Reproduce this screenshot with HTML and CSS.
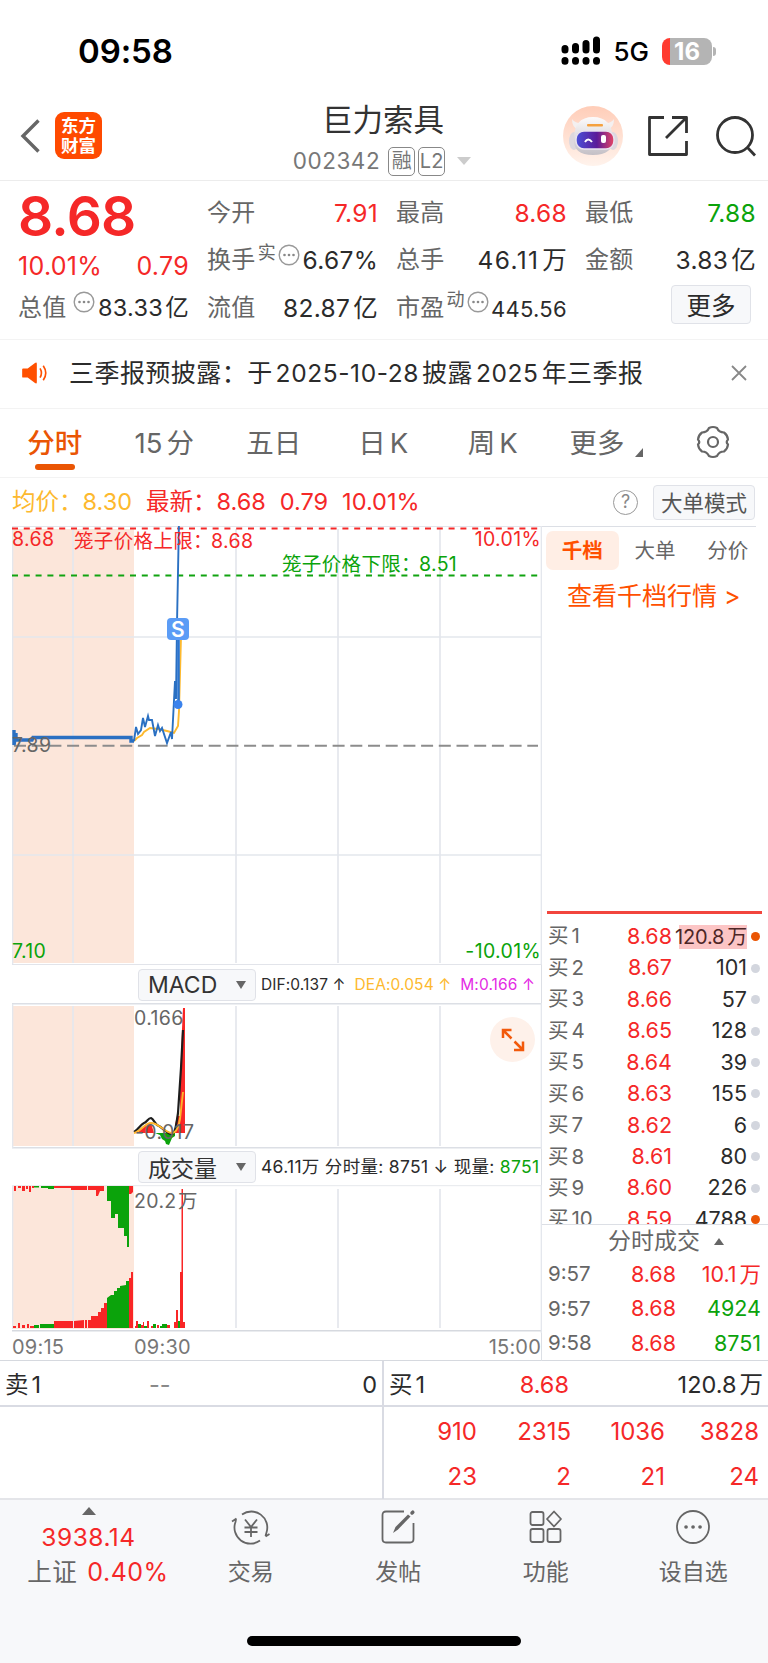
FILE: index.html
```html
<!DOCTYPE html>
<html lang="zh-CN">
<head>
  <meta charset="utf-8">
  <title>巨力索具 002342</title>
  <link rel="stylesheet" href="styles.css">
</head>
<body>

  <!-- Status bar -->
  <div class="status">
    <span class="clock">09:58</span>
    <svg class="signal" width="40" height="29" viewBox="0 0 40 29">
      <g stroke="#000" stroke-width="7" stroke-linecap="round">
        <path d="M4 12.500v1.500M14.500 10.500v3.500M25 7.500v6.500M35.500 4v10M4 24.500v.7M14.500 24.500v.7M25 24.500v.7M35.500 24.500v.7"/>
      </g>
    </svg>
    <span class="net">5G</span>
    <span class="battery"><b>16</b></span>
    <span class="battery-tip"></span>
  </div>

  <!-- Header -->
  <div class="header">
    <svg class="back" width="22" height="36" viewBox="0 0 22 36"><path d="M18.500 2.500L3 18l15.500 15.500" fill="none" stroke="#666" stroke-width="3.400"/></svg>
    <div class="logo">东方<br>财富</div>
    <div class="title">
      <h1>巨力索具</h1>
      <div class="code"><span>002342</span><i>融</i><i>L2</i><svg width="14" height="8"><path d="M0 0h14l-7 8z" fill="#ccc"/></svg></div>
    </div>
    <svg class="robot" width="60" height="60" viewBox="0 0 60 60">
      <defs>
        <linearGradient id="halo" x1="0" y1="0" x2="0" y2="1"><stop offset="0" stop-color="#ffcdb8"/><stop offset="1" stop-color="#fff3ec"/></linearGradient>
        <linearGradient id="visor" x1="0" y1="0" x2="1" y2="0"><stop offset="0" stop-color="#4a50d8"/><stop offset=".55" stop-color="#5b1a99"/><stop offset="1" stop-color="#e64564"/></linearGradient>
        <linearGradient id="shell" x1="0" y1="0" x2="0" y2="1"><stop offset="0" stop-color="#fdfbfb"/><stop offset="1" stop-color="#c4c0c6"/></linearGradient>
      </defs>
      <circle cx="30" cy="30" r="30" fill="url(#halo)"/>
      <path d="M9 13q0 9 6 10l6-6q-9 1-12-4zM51 13q0 9-6 10l-5-6q8 1 11-4z" fill="#f4f0f0"/>
      <ellipse cx="11" cy="35" rx="5" ry="9" fill="#ddd8de"/>
      <ellipse cx="50" cy="35" rx="5" ry="9" fill="#ddd8de"/>
      <path d="M11 33q0-22 19-22t20 22q0 16-20 16T11 33z" fill="url(#shell)"/>
      <rect x="13" y="25" width="38" height="18" rx="8" fill="url(#visor)" stroke="#e9e2ef" stroke-width="1.500"/>
      <path d="M22 36q3-5 7 0" fill="none" stroke="#fff" stroke-width="2"/>
      <rect x="38" y="29" width="5" height="8" rx="2" fill="#fff"/>
      <rect x="24" y="18" width="16" height="2.500" rx="1" fill="#f5a13e"/>
    </svg>
    <svg class="share" width="42" height="42" viewBox="0 0 42 42" fill="none" stroke="#333" stroke-width="2.800" stroke-linejoin="round">
      <path d="M17 2.500H2.500v37h37V26M25 2.500h14.500V18M39 3L19 23"/>
    </svg>
    <svg class="search" width="42" height="42" viewBox="0 0 42 42" fill="none" stroke="#333" stroke-width="2.800">
      <circle cx="20" cy="20" r="17.500"/><path d="M32 32l8 8.500"/>
    </svg>
  </div>

  <!-- Quote summary -->
  <div class="quote">
    <div class="col first">
      <div class="price red">8.68</div>
      <div class="row change red"><span>10.01%</span><span>0.79</span></div>
      <div class="row"><label>总值</label><svg class="more-dot nudge" viewBox="0 0 22 22"><use href="#dots"/></svg><span class="small">83.33<em>亿</em></span></div>
    </div>
    <div class="col">
      <div class="row"><label>今开</label><span class="red">7.91</span></div>
      <div class="row"><label>换手</label><sup>实</sup><svg class="more-dot" viewBox="0 0 22 22"><use href="#dots"/></svg><span>6.67%</span></div>
      <div class="row"><label>流值</label><span>82.87<em>亿</em></span></div>
    </div>
    <div class="col">
      <div class="row"><label>最高</label><span class="red">8.68</span></div>
      <div class="row"><label>总手</label><span class="wide">46.11<em>万</em></span></div>
      <div class="row"><label>市盈</label><sup>动</sup><svg class="more-dot" viewBox="0 0 22 22"><use href="#dots"/></svg><span class="tiny">445.56</span></div>
    </div>
    <div class="col">
      <div class="row"><label>最低</label><span class="green">7.88</span></div>
      <div class="row"><label>金额</label><span>3.83<em>亿</em></span></div>
      <div class="row"><button class="more">更多</button></div>
    </div>
  </div>

  <!-- Notice -->
  <div class="notice">
    <svg width="26" height="22" viewBox="0 0 28 24">
      <path d="M1 7h5l8-6q2-1 2 1v20q0 2-2 1l-8-6H1q-1 0-1-1V8q0-1 1-1z" fill="#ff5000"/>
      <path d="M19.500 7q3 5 0 10M23 4q5.500 8 0 16" fill="none" stroke="#ff5000" stroke-width="1.800"/>
    </svg>
    <p>三季报预披露：于<b>2025-10-28</b>披露<b>2025</b>年三季报</p>
    <svg width="16" height="16" viewBox="0 0 16 16"><path d="M1 1l14 14M15 1L1 15" stroke="#888" stroke-width="1.800"/></svg>
  </div>

  <!-- Period tabs -->
  <div class="tabs">
    <span class="on">分时</span>
    <span>15<em>分</em></span>
    <span>五日</span>
    <span>日<em>K</em></span>
    <span>周<em>K</em></span>
    <span class="pull">更多<svg width="8" height="9"><path d="M8 0v9H0z" fill="#666"/></svg></span>
    <svg class="gear" width="34" height="34" viewBox="0 0 34 34" fill="none" stroke="#666" stroke-width="2.200" stroke-linejoin="round">
      <path d="M13 3q4-2 8 0 2 4.500 7 4.500 3.500 2.500 4 7-2.500 2.500 0 5-.5 4.500-4 7-5 0-7 4.500-4 2-8 0-2-4.500-7-4.500-3.500-2.500-4-7 2.500-2.500 0-5 .5-4.500 4-7 5 0 7-4.500z"/><circle cx="17" cy="17" r="5"/>
    </svg>
  </div>

  <div class="info">
    <span class="amber">均价：</span><span class="amber num">8.30</span>
    <span class="red latest">最新：</span><span class="red num">8.68</span><span class="red num">0.79</span><span class="red num">10.01%</span>
    <i class="help">?</i>
    <button class="mode">大单模式</button>
  </div>

  <div class="board">
    <!-- Charts, drawn in page units -->
    <div class="charts">
      <svg class="chart" width="530" height="439" viewBox="12 526 530 439">
        <rect x="12" y="529" width="122" height="434" fill="#fce6da"/>
        <path d="M12 526.500h530M12 964.500h530" stroke="#e2e4ea"/>
        <path d="M12.500 526v438M73 529v434M236 529v434M338 529v434M440 529v434M541.500 526v438M12 637h530M12 855h530" stroke="#e4e7ed" stroke-width="1.700"/>
        <path d="M12 528.500h529" stroke="#f52828" stroke-width="2" stroke-dasharray="6 5.800"/>
        <path d="M12 575.500h529" stroke="#11a311" stroke-width="2" stroke-dasharray="6 5.800"/>
        <path d="M14 745.800h524" stroke="#8c8c8c" stroke-width="2" stroke-dasharray="12 5.700"/>
        <path d="M134 741l3-3 5-3 2-3 6-4 8 1 9 2 7 2 4-7 1-15 2-74" fill="none" stroke="#fdb92e" stroke-width="1.900"/>
        <path d="M14 730v15l2-12v7h16l1-2.500h98v3.500h3" fill="none" stroke="#2a70c2" stroke-width="3.400"/>
        <path d="M134 741l2-14 2 7 3-4 2-12 2 9 3-11 1 4h3l3 16 3-11 2 6 2-3 5 15 4-11 1 7 3-58 1 18 1-75 2-104" fill="none" stroke="#2a70c2" stroke-width="1.900"/>
        <path d="M178.500 640v62" stroke="#2a74d0" stroke-width="2.600"/>
        <circle cx="178" cy="704.500" r="4.500" fill="#3a82ec"/>
        <rect x="167" y="618" width="22" height="22" rx="4" fill="#5b9cf6"/>
        <text class="badge" x="178" y="636.500" text-anchor="middle">S</text>
        <text class="red" x="12" y="546">8.68</text>
        <text class="red cage" x="74" y="548">笼子价格上限：<tspan x="211">8.68</tspan></text>
        <text class="red" x="541" y="546" text-anchor="end">10.01%</text>
        <text class="green cage" x="282" y="571">笼子价格下限：<tspan x="419">8.51</tspan></text>
        <text class="grey" x="12" y="751.500">7.89</text>
        <text class="green" x="12" y="958">7.10</text>
        <text class="green" x="541" y="958" text-anchor="end">-10.01%</text>
      </svg>

      <div class="bar">
        <button class="drop">MACD<svg width="10" height="8"><path d="M0 0h10L5 8z" fill="#666"/></svg></button>
        <span class="ind dif">DIF:0.137 ↑</span><span class="ind amber">DEA:0.054 ↑</span><span class="ind pink">M:0.166 ↑</span>
      </div>

      <div class="macd">
        <svg class="chart" width="530" height="146" viewBox="12 1003 530 146">
          <rect x="12" y="1006" width="122" height="140" fill="#fce6da"/>
          <path d="M12 1003.700h530M12 1147.700h530" stroke="#dcdfe5" stroke-width="1.400"/>
          <path d="M12.500 1004v144M73 1006v140M236 1006v140M338 1006v140M440 1006v140M541.500 1003v146" stroke="#e4e7ed" stroke-width="1.700"/>
          <path d="M137 1133l8-7 6-3 3 10zM175 1133v-8l2-9h3v-30l2-57 1-21h2v125z" fill="#f92626"/>
          <path d="M155 1133h20v3l-3 2-3 7-3-1-1-3-3-2-2-4z" fill="#0ba30b"/>
          <path d="M134 1132c4-2 6-7 10-9 3-1 4-5 7-5 3 1 4 7 8 8 4 2 8 8 13 8 3-1 4-7 6-21l3-45 2-38" fill="none" stroke="#1d1d1d" stroke-width="2.200"/>
          <path d="M134 1133c6-1 11-10 17-10 8 0 13 9 21 10 3 0 6-3 8-14l3-27" fill="none" stroke="#fdb52a" stroke-width="1.900"/>
          <text class="grey" x="134" y="1025">0.166</text>
          <text class="grey" x="135" y="1139">-0.017</text>
        </svg>
        <div class="expand">
          <svg width="24" height="24" viewBox="0 0 24 24" fill="none" stroke="#f25a0c" stroke-width="2.500"><path d="M10.500 2H2v8M2.500 2.500l8 8M22 13.500V22h-9M13.500 13.500l8 8"/></svg>
        </div>
      </div>

      <div class="bar vol">
        <button class="drop">成交量<svg width="10" height="8"><path d="M0 0h10L5 8z" fill="#666"/></svg></button>
        <span class="ind">46.11万 分时量: 8751 ↓ 现量: <b class="green">8751</b></span>
      </div>

      <svg class="chart" width="530" height="148" viewBox="12 1185 530 148">
        <rect x="12" y="1186" width="122" height="143" fill="#fce6da"/>
        <path d="M12 1185.700h530" stroke="#e6e8ec"/>
        <path d="M12 1330.700h530" stroke="#d6d9df" stroke-width="1.600"/>
        <path d="M12.500 1186v143M73 1189v139M236 1189v139M338 1189v139M440 1189v139M541.500 1185v148" stroke="#e4e7ed" stroke-width="1.700"/>
        <!-- unmatched volume -->
        <path d="M14 1186h2v5h-2zM18 1186h3v2h-3zM22 1186h3v5h-3zM26 1186h2v3h-2zM29 1186h2v6h-2zM32 1186h2v2h-2zM54 1186h17v2h-17zM71 1186h16v4h-16v-2zM88 1186h16v5h-4l-2 5h-2v-6h-8zM129 1186h4v6l-2 2h-2z" fill="#f92626"/>
        <path d="M34 1186h5v1.500h-5zM41 1186h13v3h-6v-1h-7zM107 1186h22v61h-2v-11h-3v-8h-6v-14h-3v4h-4v-17h-4z" fill="#0ba30b"/>
        <!-- matched volume -->
        <path d="M13 1328v-2h3v2zM18 1328v-5h2v5zM22 1328v-3h3v3zM27 1328v-4h2v4zM30 1328v-2h4v2zM54 1328v-7h19v7zM74 1328v-7l10-1v8zM85 1328v-8h2v8zM88 1328v-8h3v-4h7v-4h3v-4h3v-5h3v25zM129 1328v-50h2v-6h2v56z" fill="#f92626"/>
        <path d="M34 1328v-3h5v3zM40 1328v-4h14v4zM107 1328v-30l4-3h3v-4h3v-3h3v-2l6-1v-4h3v47z" fill="#0ba30b"/>
        <!-- trading session -->
        <path d="M135 1328v-2h1v-5h2v7zM141 1328v-3h2v-3h1v6zM147 1328v-7h2v7zM151 1328v-2h2v2zM157 1328v-3h2v3zM167 1328v-3h3v3zM174 1328v-6h2v-12h2v18zM180 1328v-56h1.500v-83h1.500v133h2v6z" fill="#f92626"/>
        <path d="M138 1328v-4h3v4zM144 1328v-2h3v2zM153 1328v-4h3v4zM160 1328v-2h2v-2h5v4zM178 1328v-7h2v7z" fill="#0ba30b"/>
        <text class="grey" x="134" y="1208">20.2<tspan x="178">万</tspan></text>
      </svg>

      <div class="times"><span>09:15</span><span>09:30</span><span>15:00</span></div>
    </div>

    <!-- Order book -->
    <div class="book">
      <div class="book-tabs"><span class="on">千档</span><span>大单</span><span>分价</span></div>
      <a class="link">查看千档行情 &gt;</a>
      <div class="levels">
        <div class="lv hot"><span>买<em>1</em></span><b>8.68</b><u>120.8<em>万</em></u></div>
        <div class="lv"><span>买<em>2</em></span><b>8.67</b><u>101</u></div>
        <div class="lv"><span>买<em>3</em></span><b>8.66</b><u>57</u></div>
        <div class="lv"><span>买<em>4</em></span><b>8.65</b><u>128</u></div>
        <div class="lv"><span>买<em>5</em></span><b>8.64</b><u>39</u></div>
        <div class="lv"><span>买<em>6</em></span><b>8.63</b><u>155</u></div>
        <div class="lv"><span>买<em>7</em></span><b>8.62</b><u>6</u></div>
        <div class="lv"><span>买<em>8</em></span><b>8.61</b><u>80</u></div>
        <div class="lv"><span>买<em>9</em></span><b>8.60</b><u>226</u></div>
        <div class="lv last"><span>买<em>10</em></span><b>8.59</b><u>4788</u></div>
      </div>
      <div class="ticks-title">分时成交<svg width="10" height="7"><path d="M0 7h10L5 0z" fill="#666"/></svg></div>
      <div class="tick"><span>9:57</span><b>8.68</b><u class="red">10.1<em>万</em></u></div>
      <div class="tick"><span>9:57</span><b>8.68</b><u class="green">4924</u></div>
      <div class="tick"><span>9:58</span><b>8.68</b><u class="green">8751</u></div>
    </div>
  </div>

  <!-- Best ask / bid with order queue -->
  <div class="best">
    <div class="side sell">
      <div class="best-row"><span>卖<em>1</em></span><i>--</i><span>0</span></div>
    </div>
    <div class="side buy">
      <div class="best-row"><span>买<em>1</em></span><i class="red">8.68</i><span>120.8<em>万</em></span></div>
      <div class="queue">
        <span>910</span><span>2315</span><span>1036</span><span>3828</span>
        <span>23</span><span>2</span><span>21</span><span>24</span>
      </div>
    </div>
  </div>

  <!-- Bottom bar -->
  <div class="footer">
    <div class="index">
      <svg width="14" height="8"><path d="M0 8h14L7 0z" fill="#666"/></svg>
      <div class="red">3938.14</div>
      <div class="sh">上证<span class="red">0.40%</span></div>
    </div>
    <div class="nav">
      <svg width="40" height="36" viewBox="0 0 40 36"><path d="M11 5.500a16 16 0 0 1 24.500 18l-1 3.500M38.500 25l-4 2.500M29 31.500A16 16 0 0 1 4.500 13l.5-3M1 12.500l4.500-3M14 10.500l6 7.500 6-7.500M20 18v10M13.500 18.500h13M13.500 23h13"/></svg>
      交易
    </div>
    <div class="nav">
      <svg width="36" height="36" viewBox="0 0 36 36"><path d="M24 2.500H6Q2.500 2.500 2.500 6v24q0 3.500 3.500 3.500h24q3.500 0 3.500-3.500V14"/><path class="pen" d="M13 24l2.500-6L28 5.500l2.500 2L18 20.500z"/><path d="M32 4l.8-.8" stroke-width="3.500" stroke-linecap="round"/></svg>
      发帖
    </div>
    <div class="nav">
      <svg width="36" height="36" viewBox="0 0 36 36"><rect x="2.500" y="3" width="13" height="13" rx="2"/><rect x="2.500" y="20" width="13" height="13" rx="2"/><rect x="19.500" y="20" width="13" height="13" rx="2"/><path d="M26 2.500l7 7.500-7 7.500-7-7.500z" stroke-linejoin="round"/></svg>
      功能
    </div>
    <div class="nav">
      <svg width="36" height="36" viewBox="0 0 36 36"><circle cx="18" cy="18" r="16"/><path d="M11 18h.1M18 18h.1M25 18h.1" stroke-width="3.600" stroke-linecap="round"/></svg>
      设自选
    </div>
    <div class="home"></div>
  </div>

  <svg class="defs" width="0" height="0">
    <symbol id="dots" viewBox="0 0 22 22"><circle cx="11" cy="11" r="9.800" fill="none" stroke="#999" stroke-width="1.400"/><g fill="#888"><circle cx="6.500" cy="11" r="1.300"/><circle cx="11" cy="11" r="1.300"/><circle cx="15.500" cy="11" r="1.300"/></g></symbol>
  </svg>
</body>
</html>
```

FILE: styles.css
```css
* { box-sizing: border-box; }
body {
  margin: 0; width: 768px; height: 1663px; overflow: hidden;
  background: #fff; color: #2b2b2b;
  font-family: Inter, "Noto Sans CJK SC", sans-serif;
  font-size: 24px; line-height: 1; white-space: nowrap;
}
i, em, b, u { font-style: normal; font-weight: inherit; text-decoration: none; }
svg { flex: none; display: block; }
button { font-family: inherit; background: #f7f8fa; border: 1.5px solid #e0e2e8; border-radius: 4px; padding: 0; color: #2b2b2b; }
em { margin-left: 3px; }
.defs { position: absolute; }

.red   { color: #f52828; fill: #f52828; }
.green { color: #0ba30b; fill: #0ba30b; }
.amber { color: #fdb92e; }
.pink  { color: #e42be4; }
.grey  { fill: #666; }

/* status bar */
.status  { height: 103px; padding: 0 52px 0 78px; display: flex; align-items: center; color: #000; }
.clock   { font-size: 33px; font-weight: 600; margin-right: auto; letter-spacing: -.1px; }
.net     { font-size: 26px; font-weight: 500; margin: 0 13px 0 12px; letter-spacing: 0; }
.signal  { margin-top: -2px; }
.battery { width: 50px; height: 27px; border-radius: 8px; background: linear-gradient(90deg, #ff3b30 8px, #b4b4b4 8px); color: #fff; font-size: 24px; line-height: 27px; text-align: center; }
.battery b { font-weight: 700; }
.battery-tip { width: 3px; height: 9px; margin-left: 1px; border-radius: 0 4px 4px 0; background: #b4b4b4; }

/* header */
.header { height: 78px; display: flex; border-bottom: 1.5px solid #ececec; }
.back   { margin: 15px 0 0 20px; }
.logo   { width: 47px; height: 47px; margin: 9px 0 0 13px; padding-top: 4px; border-radius: 9px; background: #ff4a00; color: #fff; font-size: 17.500px; line-height: 19.500px; font-weight: 700; text-align: center; }
.title  { width: 260px; margin-left: 152px; text-align: center; }
.title h1 { margin: 0 2px 0 0; font-size: 30.500px; font-weight: 400; line-height: 33px; color: #333; }
.code   { display: flex; align-items: center; justify-content: center; height: 30px; margin-top: 10px; padding-right: 4px; font-size: 22.500px; color: #777; }
.code span { margin-right: 8px; letter-spacing: .5px; }
.code i { width: 27px; height: 29px; margin-right: 3px; border: 1.5px solid #888; border-radius: 5px; font-size: 20px; line-height: 26px; }
.code svg { margin-left: 9px; }
.robot  { margin: 3px 0 0 49px; }
.share  { margin: 12px 0 0 24px; }
.search { margin: 12px 0 0 26px; }

/* quote */
.quote { height: 159px; padding: 8px 12px 0 18px; display: flex; justify-content: space-between; border-bottom: 1.500px solid #f3f3f3; }
.col   { width: 171px; }
.price { height: 60px; line-height: 54px; font-size: 55px; font-weight: 600; letter-spacing: -.7px; }
.row   { height: 47.500px; display: flex; align-items: center; justify-content: space-between; font-size: 24.500px; letter-spacing: .3px; }
.row.change { height: 35px; font-size: 25px; }
.row label { color: #666; font-size: 24px; }
.row sup { align-self: flex-start; margin-top: 7px; font-size: 18px; line-height: 18px; color: #666; }
.more-dot { width: 22px; height: 22px; align-self: flex-start; margin-top: 7px; }
.nudge { margin-left: 3px; }
.row .wide { letter-spacing: 1.300px; margin-right: -1px; }
.small { font-size: 23.500px; }
.small em { margin-left: 2px; }
.tiny  { font-size: 22px; padding-top: 3px; }
.more  { width: 80px; height: 39px; margin: -6px 5px 0 auto; font-size: 24.500px; }

/* notice */
.notice { height: 69px; padding: 0 21px 2px 22px; display: flex; align-items: center; border-bottom: 1.500px solid #f3f3f3; }
.notice p { margin: 0 auto 0 21px; font-size: 25px; letter-spacing: .45px; }
.notice b { margin: 0 3px; font-size: 24.500px; letter-spacing: .6px; }

/* tabs */
.tabs { height: 69px; padding-right: 38px; display: grid; grid-template-columns: repeat(5, 109.500px) 1fr auto; border-bottom: 1.500px solid #f3f3f3; font-size: 27.500px; color: #666; line-height: 68px; text-align: center; }
.tabs em { margin-left: 4px; }
.tabs .on { color: #ea5504; font-weight: 500; }
.tabs .on::after { content: ""; display: block; width: 40px; height: 6px; margin: -13px auto 0; border-radius: 3px; background: #ea5504; }
.pull { display: flex; align-items: flex-end; padding-left: 22px; }
.pull svg { margin: 0 0 20px 10px; }
.gear { margin-top: 16px; }

/* info line */
.info { height: 48px; padding: 0 13px 0 12px; display: flex; align-items: center; font-size: 23.500px; }
.info .num { margin-right: 14px; }
.help { width: 25px; height: 25px; margin-left: auto; border: 1.500px solid #999; border-radius: 50%; color: #888; font-size: 18px; line-height: 22px; text-align: center; }
.mode { width: 102px; height: 35px; margin: 1px 0 0 15px; padding-bottom: 4px; font-size: 21.500px; color: #555; }

/* charts */
.board  { display: grid; grid-template-columns: 542px 226px; height: 835px; border-bottom: 1.500px solid #d6d9df; }
.charts { padding-left: 12px; }
.chart text { font-size: 19.500px; letter-spacing: .35px; }
.chart .badge { font-size: 21px; font-weight: 600; fill: #fff; }
.bar    { height: 38px; padding: 1px 0 0 126px; border-right: 1px solid #dcdfe5; display: flex; align-items: center; }
.vol    { height: 36px; padding-top: 0; }
.drop   { flex: none; width: 118px; height: 32px; margin-right: 5px; padding: 0 9px; display: flex; align-items: center; justify-content: space-between; font-size: 23px; color: #333; }
.ind    { font-size: 17.500px; letter-spacing: .3px; }
.bar:not(.vol) .ind { font-size: 15.500px; margin-right: 9px; letter-spacing: .1px; }
.macd   { position: relative; }
.expand { position: absolute; right: 7px; top: 14px; width: 45px; height: 45px; border-radius: 50%; background: #fef1ea; display: grid; place-items: center; }
.times  { height: 28px; display: flex; align-items: center; font-size: 20px; letter-spacing: .2px; color: #777; border-right: 1px solid #dcdfe5; }
.times span:first-child { width: 122px; }
.times span:last-child  { margin-left: auto; }

/* order book */
.book { border-top: 1px solid #dcdfe5; margin-right: 12px; }
.book-tabs { height: 43px; margin-right: -8px; padding: 4px 0 0 4px; display: flex; color: #666; font-size: 20.500px; line-height: 39px; }
.book-tabs span { width: 73px; text-align: center; }
.book-tabs .on  { border-radius: 7px; background: #ffeee5; color: #ff5000; font-weight: 700; }
.link   { display: block; height: 344px; margin: 0 -6px 0 5px; padding: 14px 0 0 20px; border-bottom: 3px solid #f2453d; color: #ff5000; font-size: 25px; }
.levels { height: 311px; margin-right: -12px; padding: 7px 8px 0 6px; overflow: hidden; border-bottom: 1.500px solid #dcdfe5; }
.lv     { height: 31.450px; display: grid; grid-template-columns: 44px 80px 75px 9px; align-items: center; font-size: 21.500px; }
.lv span, .tick span { color: #666; font-size: 20.500px; }
.lv b, .tick b { color: #f52828; text-align: right; }
.lv u   { text-align: right; }
.lv::after { content: ""; width: 9px; height: 9px; margin-left: 4px; border-radius: 50%; background: #d3d6de; }
.hot::after, .last::after { background: #ea5504; }
.hot u  { justify-self: end; padding: 2px 0; background: linear-gradient(90deg, transparent 4px, #fcc5c5 4px); color: #4d2626; font-size: 20px; letter-spacing: -.2px; }
.ticks-title { height: 32px; padding-left: 66px; display: flex; align-items: center; font-size: 23px; color: #666; }
.ticks-title svg { margin-left: 14px; }
.tick   { height: 34.600px; margin-right: -6px; padding-left: 6px; display: grid; grid-template-columns: 49px 79px 85px; align-items: center; font-size: 21.500px; }
.tick u { text-align: right; }

/* best ask / bid */
.best { height: 137px; display: grid; grid-template-columns: 384px 384px; }
.sell { border-right: 2px solid #d9dbe3; }
.best-row { height: 46px; padding: 4px 5px 0 5px; display: grid; grid-template-columns: 1fr 1fr 1fr; align-items: center; border-bottom: 2px solid #d9dbe3; font-size: 23.500px; }
.best-row i { padding-left: 6px; }
.sell .best-row i { color: #888; padding-left: 20px; }
.best-row span:last-child { text-align: right; }
.queue { padding: 2px 9px 0 0; display: grid; grid-template-columns: repeat(4, 94px); justify-content: end; color: #f52828; font-size: 24px; line-height: 45px; text-align: right; }

/* bottom bar */
.footer { height: 166px; display: grid; grid-template-columns: 177px repeat(4, 147.500px); align-content: start; border-top: 2px solid #e4e5e9; background: #f7f8fa; color: #666; }
.index  { padding-top: 7px; text-align: center; line-height: 35px; font-size: 24.500px; letter-spacing: .5px; }
.index svg { margin: 0 auto 5px; }
.sh     { padding-left: 19px; }
.sh .red { margin-left: 10px; font-size: 25px; }
.nav    { padding-top: 9px; display: flex; flex-direction: column; align-items: center; gap: 16px; font-size: 23px; }
.nav svg { fill: none; stroke: #666; stroke-width: 1.800; }
.nav .pen { fill: #666; stroke: none; }
.home   { grid-column: 1 / -1; width: 274px; height: 10px; margin: 46px auto 0; border-radius: 5px; background: #000; }
```
